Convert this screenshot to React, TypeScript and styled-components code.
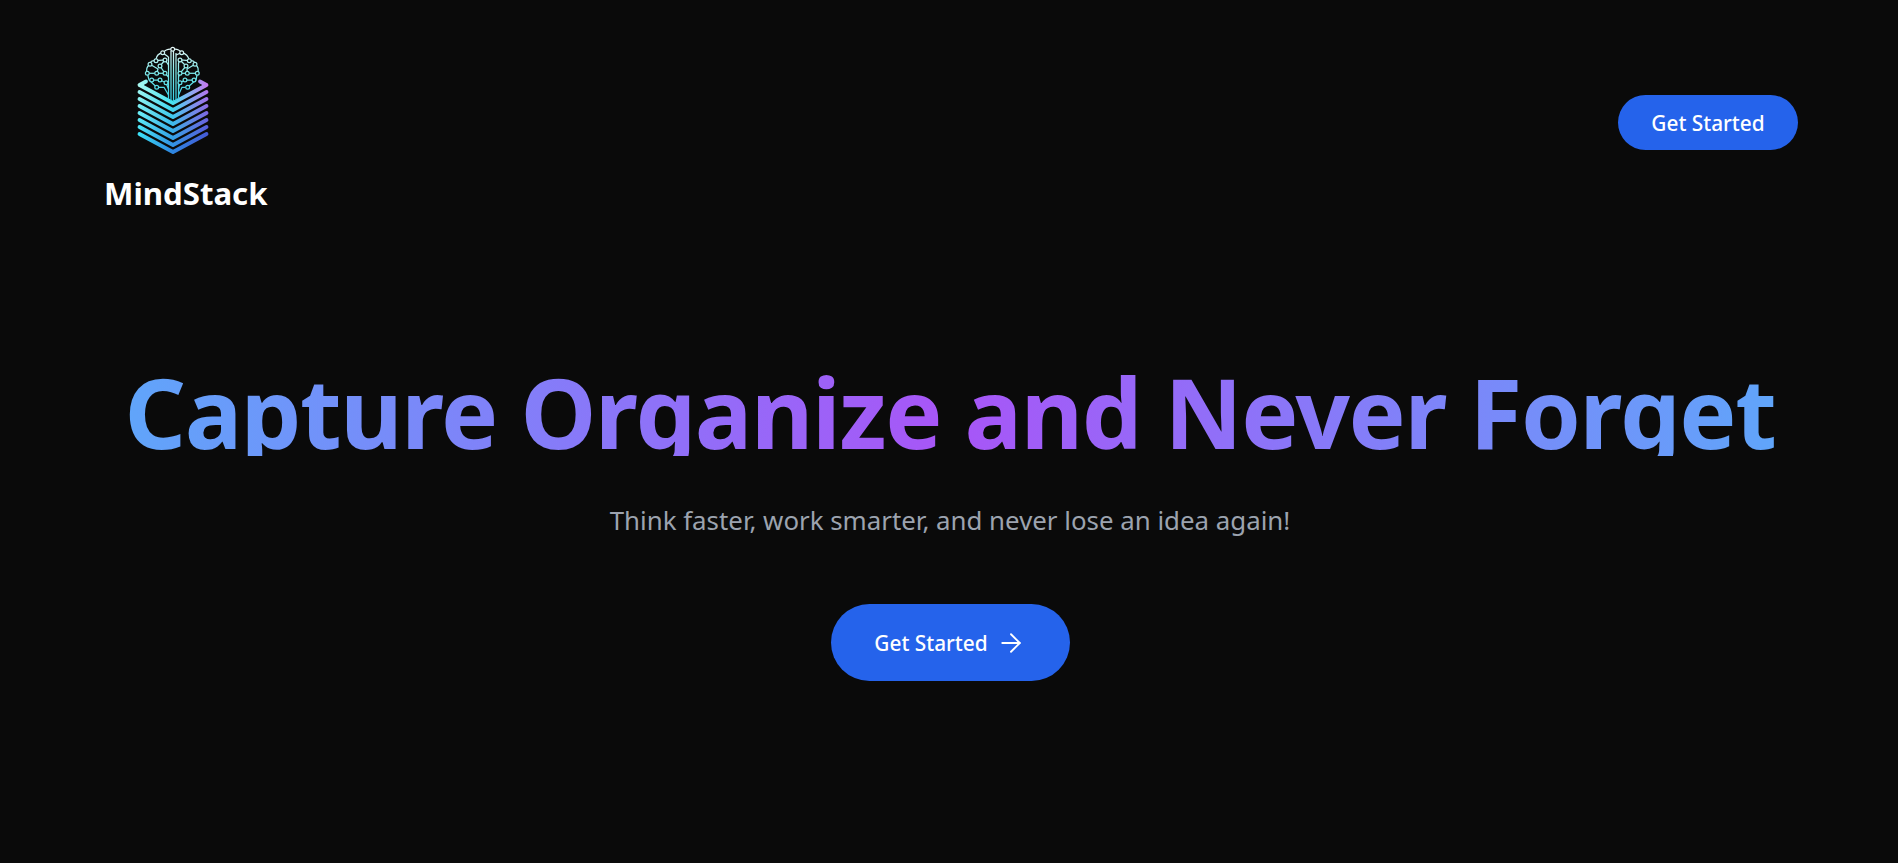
import React from "react";
import styled, { createGlobalStyle } from "styled-components";
import { ArrowRight } from "lucide-react";

const Global = createGlobalStyle`
  html, body { margin: 0; padding: 0; background: #0a0a0a; }
  body { font-family: "Noto Sans", "Open Sans", sans-serif; color: #fff; }
`;

const Page = styled.div`
  min-height: 863px;
  background: #0a0a0a;
  display: flex;
  flex-direction: column;
  overflow: hidden;
`;

const Nav = styled.header`
  display: flex;
  justify-content: space-between;
  align-items: flex-start;
  padding: 45px 100px 0 104px;
`;

const Brand = styled.div`
  display: flex;
  flex-direction: column;
  align-items: flex-start;
`;

const LogoMark = styled.svg`
  display: block;
  width: 80px;
  height: 115px;
  margin-left: 30px;
`;

const BrandName = styled.div`
  margin-top: 15px;
  font-size: 31.2px;
  line-height: 36px;
  font-weight: 700;
  color: #fff;
`;

const NavButton = styled.button`
  margin-top: 50px;
  width: 180px;
  height: 55px;
  border: 0;
  border-radius: 28px;
  background: #2563eb;
  color: #fff;
  font: 500 20.8px/24px "Noto Sans", sans-serif;
`;

const Hero = styled.main`
  display: flex;
  flex-direction: column;
  align-items: center;
  margin-top: 149px;
  padding-left: 2px;
`;

const Title = styled.h1`
  margin: 0;
  box-sizing: border-box;
  height: 96px;
  padding-top: 4px;
  font-size: 96px;
  line-height: 96px;
  font-weight: 700;
  letter-spacing: -1.4px;
  white-space: nowrap;
  background: linear-gradient(90deg, #60a5fa, #a855f7, #60a5fa);
  -webkit-background-clip: text;
  background-clip: text;
  color: transparent;
`;

const Subtitle = styled.p`
  margin: 48px 0 0;
  font-size: 25.85px;
  line-height: 32px;
  font-weight: 400;
  color: #9ca3af;
`;

const HeroButton = styled.button`
  margin-top: 68px;
  width: 239px;
  height: 77px;
  border: 0;
  border-radius: 39px;
  background: #2563eb;
  color: #fff;
  font: 500 20.8px/24px "Noto Sans", sans-serif;
  display: flex;
  align-items: center;
  justify-content: center;
  gap: 8px;
`;

const chevrons = [0, 1, 2, 3, 4, 5, 6, 7];
const mix = (a: number[], b: number[], t: number) =>
  `rgb(${a.map((v, i) => Math.round(v + (b[i] - v) * t)).join(",")})`;

const nodes: [number, number][] = [
  [38.7, 4.3], [28.7, 7.7], [47.7, 7.7], [22, 15.7], [55.3, 15.7], [16, 19.3], [61, 19.3],
  [13.3, 28.3], [63.3, 28.3], [31, 15], [46, 15], [22.7, 28.3], [31, 28.3], [46, 28.3],
  [53.3, 28.3], [26, 35], [51, 35], [22.7, 42.3], [53.7, 42.3], [17.7, 35], [60, 35],
  [32, 37.7], [46, 37.7], [26, 21], [52, 21],
];

const traces = [
  "M37 6V56", "M39.5 6V57", "M42 8V56", "M34.5 12V54", "M44.5 18V54",
  "M28.7 7.7L34.5 12", "M47.7 7.7L42 10",
  "M22 15.7L31 15L34.5 20", "M55.3 15.7L46 15L44.5 18",
  "M16 19.3L24 24L22.7 28.3", "M61 19.3L53 24L53.3 28.3",
  "M26 21L31 28.3", "M52 21L46 28.3", "M26 21L31 15", "M52 21L46 15",
  "M13.3 28.3H31", "M63.3 28.3H46",
  "M31 28.3L34.5 32", "M46 28.3L44.5 32",
  "M17.7 35H26L32 37.7", "M60 35H51L46 37.7",
  "M32 37.7L34.5 44", "M46 37.7L44.5 44",
  "M22.7 42.3H30L34.5 50", "M53.7 42.3H48L44.5 50",
  "M13.3 28.3L15 35L22.7 42.3", "M63.3 28.3L62 35L53.7 42.3",
  "M13.3 28.3Q11 23 16 19.3Q16 15 22 15.7Q22 9 28.7 7.7Q33 3 38.7 4.3Q44 3 47.7 7.7Q54 9 55.3 15.7Q61 15 61 19.3Q66 23 63.3 28.3",
];

const Logo = () => (
  <LogoMark viewBox="0 0 80 115" aria-label="MindStack logo">
    <defs>
      {chevrons.map((i) => {
        const t = i / 7;
        return (
          <linearGradient key={i} id={`lay${i}`} gradientUnits="userSpaceOnUse" x1="4" x2="74" y1="0" y2="0">
            <stop offset="0" stopColor={mix([170, 248, 240], [60, 228, 248], t)} />
            <stop offset="0.48" stopColor={mix([70, 228, 242], [45, 135, 225], t)} />
            <stop offset="1" stopColor={mix([200, 120, 240], [70, 90, 215], t)} />
          </linearGradient>
        );
      })}
      <linearGradient id="brainG" gradientUnits="userSpaceOnUse" x1="0" x2="0" y1="3" y2="56">
        <stop offset="0" stopColor="#e4f6f6" />
        <stop offset="0.45" stopColor="#80eaea" />
        <stop offset="1" stopColor="#30cfe6" />
      </linearGradient>
    </defs>
    {chevrons.map((i) => {
      const y = 40 + i * 7;
      const d = i === 0
        ? `M12 36.5L5.5 40L39 ${y + 18}L72.5 40L66 36.5`
        : `M5.5 ${y}L39 ${y + 18}L72.5 ${y}`;
      return <path key={i} d={d} fill="none" stroke={`url(#lay${i})`} strokeWidth="3.8" strokeLinejoin="round" strokeLinecap="round" />;
    })}
    <g fill="none" stroke="url(#brainG)" strokeWidth="1.25">
      {traces.map((d) => <path key={d} d={d} />)}
    </g>
    <g fill="#0a0a0a" stroke="url(#brainG)" strokeWidth="1.2">
      {nodes.map(([x, y]) => <circle key={`${x}-${y}`} cx={x} cy={y} r="1.9" />)}
    </g>
  </LogoMark>
);

export default function App() {
  return (
    <Page>
      <Global />
      <Nav>
        <Brand>
          <Logo />
          <BrandName>MindStack</BrandName>
        </Brand>
        <NavButton>Get Started</NavButton>
      </Nav>
      <Hero>
        <Title>Capture Organize and Never Forget</Title>
        <Subtitle>Think faster, work smarter, and never lose an idea again!</Subtitle>
        <HeroButton>
          Get Started
          <ArrowRight size={30} strokeWidth={1.5} />
        </HeroButton>
      </Hero>
    </Page>
  );
}
